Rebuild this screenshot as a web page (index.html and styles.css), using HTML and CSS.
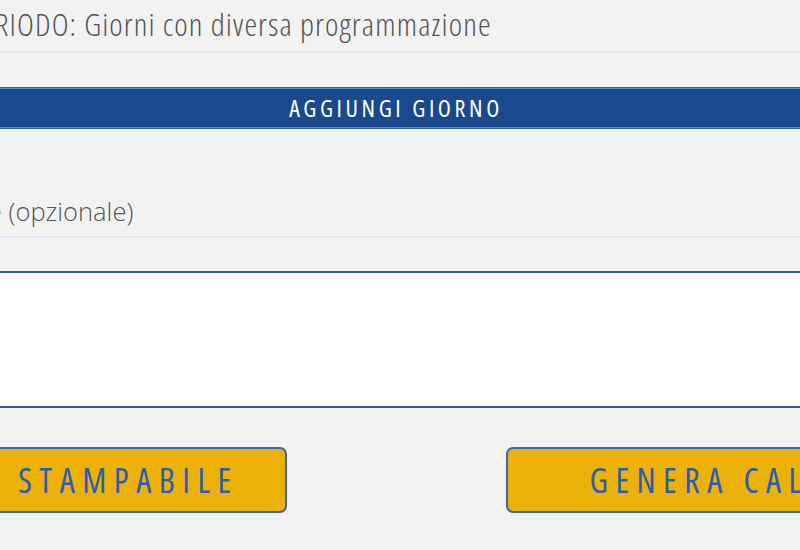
FILE: index.html
```html
<!DOCTYPE html>
<html lang="it">
<head>
  <meta charset="UTF-8" />
  <meta name="viewport" content="width=device-width, initial-scale=1.0"/>
  <title>Calendario - Giorni con diversa programmazione</title>
  <link rel="stylesheet" href="styles.css">
</head>
<body>
  <div class="form">
    <!-- Titolo periodo -->
    <div class="period-title">PERIODO: Giorni con diversa programmazione</div>

    <!-- Nuovo giorno -->
    <div class="section-bar">AGGIUNGI GIORNO</div>

    <div class="field">
      <label for="note">Note (opzionale)</label>
    </div>
    <textarea id="note" class="note-box"></textarea>

    <!-- Azioni -->
    <div class="actions">
      <button class="btn btn-print">VERSIONE STAMPABILE</button>
      <button class="btn btn-generate">GENERA CALENDARIO</button>
    </div>
  </div>
</body>
</html>
```

FILE: styles.css
```css
* { box-sizing: border-box; }
html, body {
  overflow: hidden;
}
body {
  margin: 0;
  background: #f2f2f2;
  font-family: 'Open Sans', Roboto, sans-serif;
  height: 550px;
}
.form {
  margin: 0 -28px 0 -36px;
}
.period-title {
  font-size: 32px;
  font-weight: 300;
  font-stretch: 75%;
  letter-spacing: 1.1px;
  color: #555;
  line-height: 40px;
  padding: 4px 0 7px 3px;
  border-bottom: 2px solid #e4e6f6;
}
.section-bar {
  margin-top: 34px;
  height: 42px;
  line-height: 40px;
  background: #1a4a8e;
  border-top: 1px solid #2d62b8;
  border-bottom: 1px solid #2d62b8;
  box-shadow: inset 0 1px 0 #5b87d0, inset 0 -1px 0 #5b87d0;
  color: #fff;
  text-align: center;
  font-size: 24px;
  font-stretch: 75%;
  letter-spacing: 3.6px;
}
.field {
  margin-top: 64px;
  padding-bottom: 7px;
  border-bottom: 2px solid #e4e6f6;
}
.field label {
  display: block;
  margin-left: -18px;
  font-size: 25.5px;
  font-weight: 300;
  color: #555;
  line-height: 36px;
}
.note-box {
  display: block;
  width: 100%;
  height: 137px;
  margin-top: 33px;
  border: 2px solid #2c5caa;
  background: #fff;
  resize: none;
}
.actions {
  display: flex;
  justify-content: center;
  gap: 219px;
  margin-top: 39px;
}
.btn {
  flex-shrink: 0;
  width: 520px;
  height: 66px;
  background: #ecb107;
  border: 2px solid #3467ba;
  border-radius: 7px;
  color: #2d5db0;
  font-family: 'Open Sans', Roboto, sans-serif;
  font-size: 34px;
  font-stretch: 75%;
  letter-spacing: 7.5px;
  white-space: nowrap;
  cursor: pointer;
}
.btn-print {
  text-align: right;
  padding-right: 46px;
}
.btn-generate {
  text-align: left;
  padding-left: 82px;
}
```
